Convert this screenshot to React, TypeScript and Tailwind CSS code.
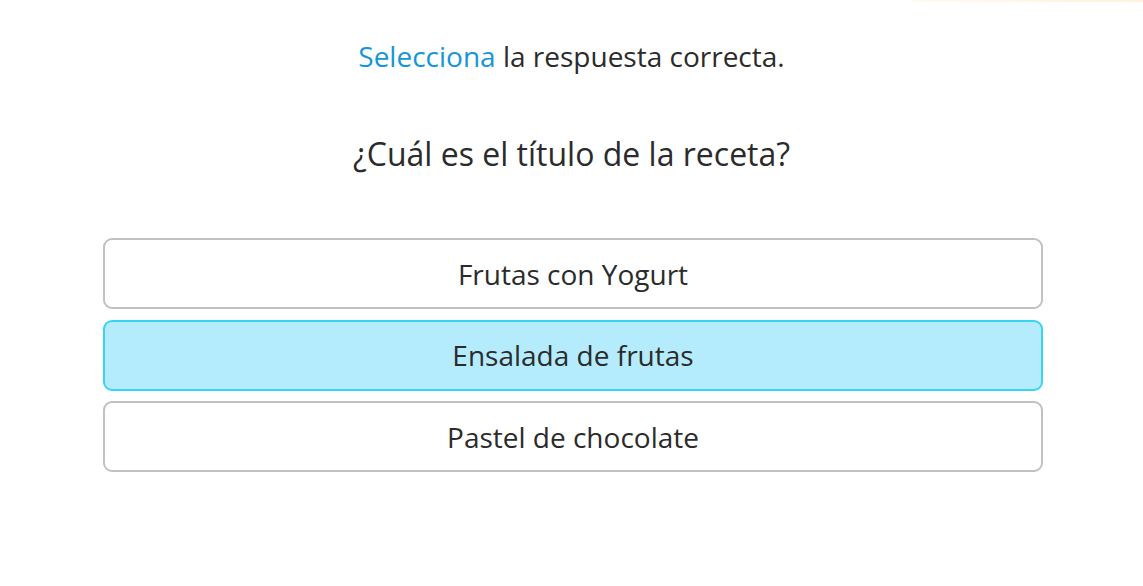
import { useState } from "react";

const options = ["Frutas con Yogurt", "Ensalada de frutas", "Pastel de chocolate"];

export default function App() {
  const [selected, setSelected] = useState(1);

  return (
    <div className="relative min-h-[586px] w-full bg-white font-['Open_Sans',sans-serif] text-[#2b2b2b]">
      {/* progress strip */}
      <div className="flex justify-end">
        <div className="h-[2px] w-[230px] bg-gradient-to-r from-[#fffaf2] to-[#fff1dc]" />
      </div>

      <div className="flex flex-col items-center pt-[35px]">
        <p className="text-[28px] leading-[38px]">
          <span className="text-[#1496d8]">Selecciona</span> la respuesta correcta.
        </p>

        <h1 className="mt-[59px] text-[32px] leading-[40px]">¿Cuál es el título de la receta?</h1>

        <div className="mt-[64px] ml-[3px] flex w-[940px] flex-col gap-[10.5px]">
          {options.map((opt, i) => (
            <button
              key={opt}
              onClick={() => setSelected(i)}
              className={
                i === selected
                  ? "h-[71px] w-full rounded-[9px] border-2 border-[#38d4f5] bg-[#b4ecfd] text-[28px] text-[#2b2b2b]"
                  : "h-[71px] w-full rounded-[9px] border-2 border-[#c1c1c1] bg-white text-[28px] text-[#2b2b2b]"
              }
            >
              {opt}
            </button>
          ))}
        </div>
      </div>
    </div>
  );
}
